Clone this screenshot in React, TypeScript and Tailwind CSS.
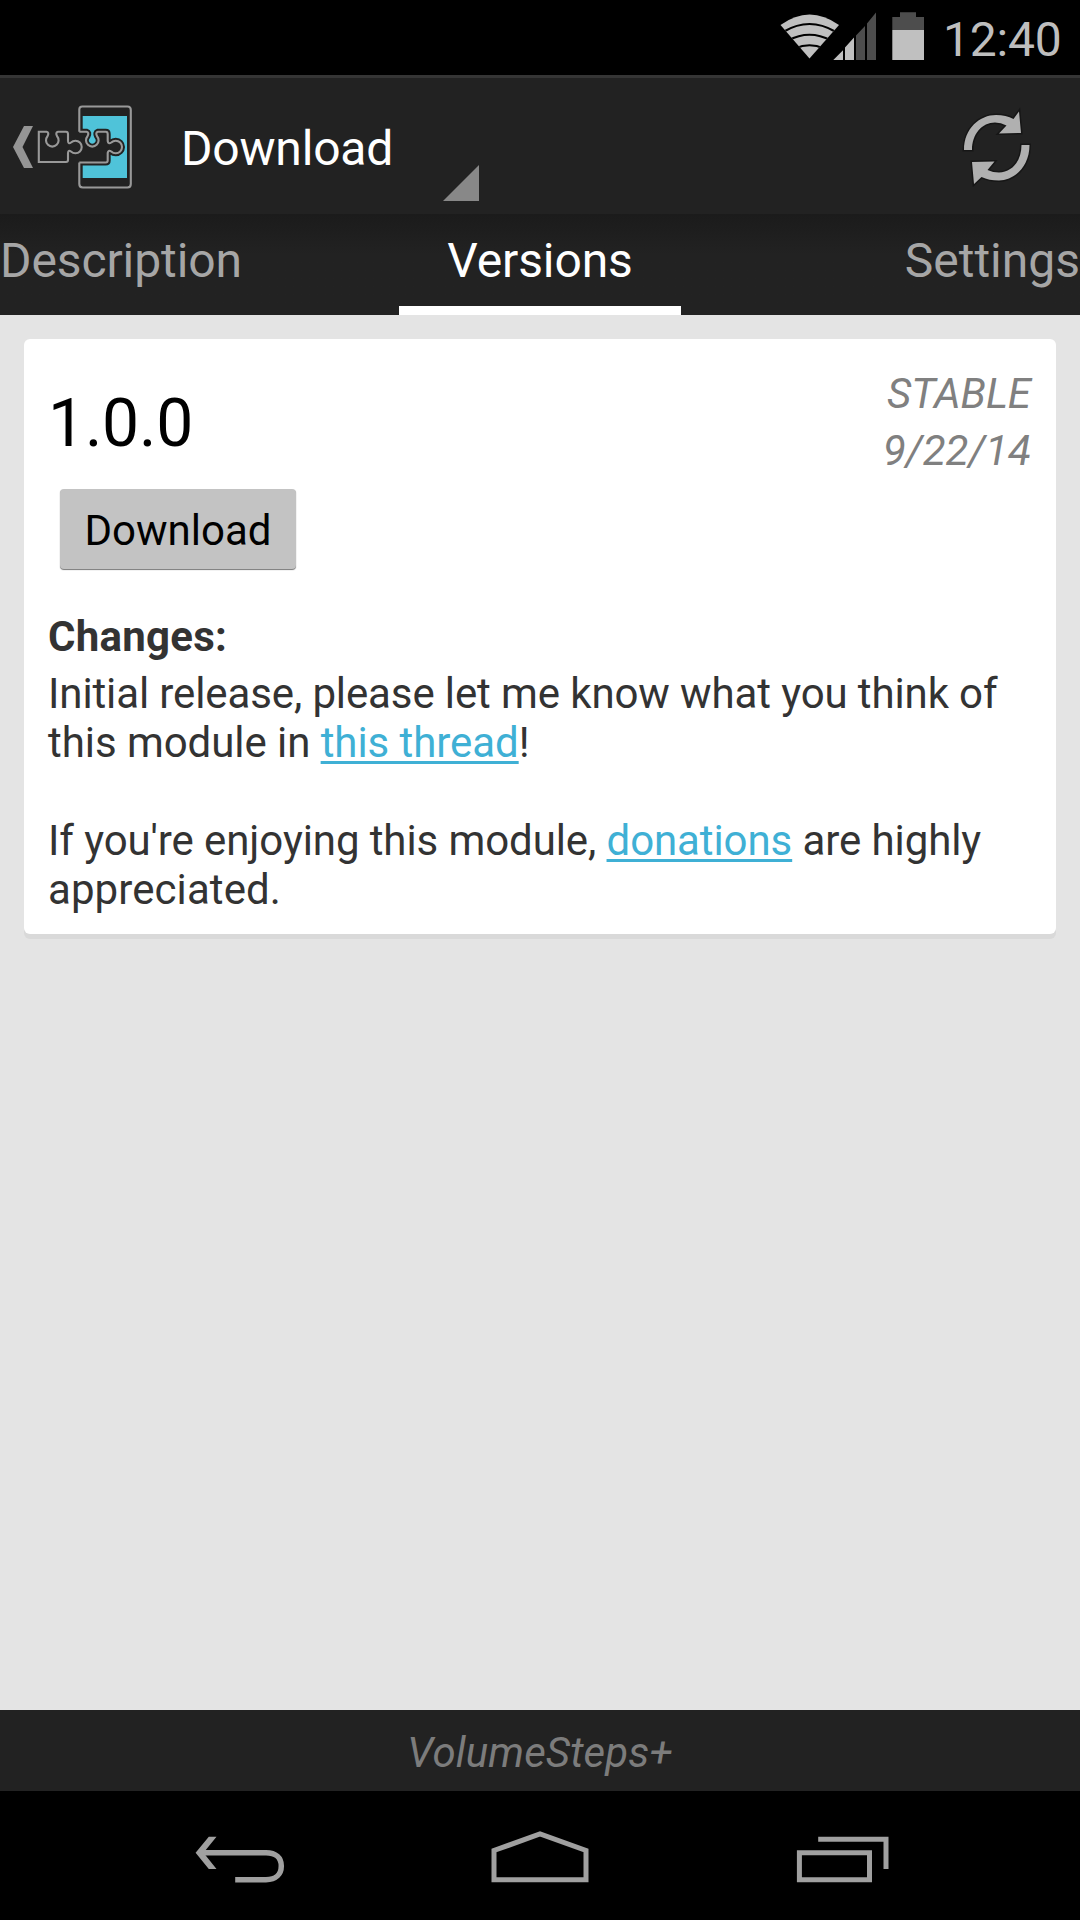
import React from "react";

function StatusBar() {
  return (
    <div className="flex h-[75px] shrink-0 items-start bg-black">
      <svg className="ml-[780px] h-[75px] w-[150px] shrink-0" viewBox="780 0 150 75">
        <defs>
          <clipPath id="wedge">
            <path d="M809.5 58.5 L780.5 25 Q809.5 4 839 25 Z" />
          </clipPath>
        </defs>
        <g clipPath="url(#wedge)">
          <rect x="780" y="10" width="60" height="50" fill="#c0c0c0" />
          <path d="M784 31.500 Q809.500 16.500 835 31.500" fill="none" stroke="#000" strokeWidth="2.200" />
          <path d="M788 40.500 Q809.500 29 831 40.500" fill="none" stroke="#000" strokeWidth="2.200" />
          <path d="M795 48.500 Q809.500 42 824 48.500" fill="none" stroke="#000" strokeWidth="2.200" />
        </g>
        <path d="M833.300 60 L843 50.300 V60Z M845 60 V47.500 L854 37.500 V60Z" fill="#c0c0c0" />
        <path d="M856 60 V35.500 L865 26 V60Z M867 60 V23.500 L876 12.500 V60Z" fill="#4d4d4d" />
        <path d="M892.300 30 V17 H900 V12.300 H916 V17 H924 V30Z" fill="#4d4d4d" />
        <path d="M892.300 30 H924 V60 H892.300Z" fill="#c0c0c0" />
      </svg>
      <span className="ml-[13px] mt-[12px] text-[48px] leading-[56px] tracking-[-0.2px] text-[#bebebe]">12:40</span>
    </div>
  );
}

function Logo() {
  const loosePiece =
    "M38.800 131.700 H46.500 Q49.500 132.500 47.500 136.200 A6.300 6.300 0 1 0 57.100 136.200 Q55.100 132.500 58 131.700 H66 Q68 131.700 68 134 V141 Q68.300 144.500 71 142.500 A6.300 6.300 0 1 1 71 151.500 Q68.300 149.500 68 153 V160 Q68 162 66 162 H38.800Z";
  const dockedPiece =
    "M79.300 131.700 H86.500 Q89.500 132.500 87.500 136.200 A6.300 6.300 0 1 0 97.100 136.200 Q95.100 132.500 98 131.700 H105.700 Q107.700 131.700 107.700 134 V141 Q108.300 144.500 111.300 142.500 A6.300 6.300 0 1 1 111.300 151.500 Q108.300 149.500 107.700 153 V160.500 Q107.700 162.500 105.700 162.500 H79.300";
  return (
    <svg className="h-[84px] w-[124px] shrink-0" viewBox="10 105 124 84" fill="none">
      <path d="M24 126 H33 L22.500 147 L33 168 H24 L13 147Z" fill="#959595" />
      <path d="M82.700 116 H127 V178 H82.700Z" fill="#4fc3d9" />
      <path d={dockedPiece} fill="#222" stroke="#222" strokeWidth="6" />
      <path d="M79.300 131.700 V109.500 Q79.300 106.500 82.300 106.500 H127.500 Q130.800 106.500 130.800 110 V184 Q130.800 187.500 127.500 187.500 H82.800 Q79.300 187.500 79.300 184 V162.500" stroke="#999" strokeWidth="2.100" />
      <path d={dockedPiece} stroke="#999" strokeWidth="2.100" />
      <path d={loosePiece} fill="#222" stroke="#999" strokeWidth="2.100" />
    </svg>
  );
}

function ActionBar() {
  return (
    <header className="flex h-[139px] shrink-0 items-start border-t-[3px] border-[#353535] bg-[#222] pl-[10px] pr-[44px]">
      <div className="mt-[27px]"><Logo /></div>
      <h1 className="ml-[47px] mt-[43px] w-[214px] whitespace-nowrap text-[48px] leading-[56px] tracking-[-0.2px] text-white">Download</h1>
      <svg className="ml-[48px] mt-[87px] h-[36px] w-[36px]" viewBox="0 0 36 36">
        <path d="M0 36 L36 0 V36Z" fill="#888" />
      </svg>
      <svg className="ml-auto mt-[29px] h-[80px] w-[80px]" viewBox="956 107 80 80">
        <g fill="#b0b0b0" stroke="#161616" strokeWidth="3" paintOrder="stroke">
          <path d="M964 150 C964 128 980 115 996 115 Q1006 115 1013.500 119 L1019 111.500 L1021 133 L999 133.500 L1006.500 125.500 Q1001 122.500 995 122.500 C982 122.500 972 134 972 150Z" />
          <path d="M1029.500 145 C1029.500 167 1014 180.500 999 180.500 Q989 180.500 981.500 177 L974 184 L972 162 L994.500 161.500 L987.500 170 Q993 172.500 999 172.500 C1012 172.500 1021.500 161 1021.500 145Z" />
        </g>
      </svg>
    </header>
  );
}

function Tabs() {
  return (
    <nav className="flex h-[101px] shrink-0 items-start justify-between bg-linear-to-b from-[#1b1b1b] to-[#222] to-40% text-[48px] leading-[56px] text-[#a6a6a6]">
      <span className="mt-[19px] w-[399px] tracking-[-0.1px]">Description</span>
      <span className="h-[101px] w-[282px] border-b-[9px] border-white pt-[19px] text-center tracking-[-0.1px] text-white">Versions</span>
      <span className="mt-[19px] w-[399px] text-right">Settings</span>
    </nav>
  );
}

function VersionCard() {
  return (
    <article className="h-[595px] rounded-[6px] bg-white px-6 pt-[26px] text-[42px] leading-[49px] text-[#333] shadow-[0_5px_0_#d9d9d9]">
      <div className="flex h-[124px] items-start justify-between">
        <h2 className="mt-[20px] text-[66px] leading-[77px] tracking-[-0.2px] text-black">1.0.0</h2>
        <div className="mr-px text-right leading-[57px] text-[#808080] italic">
          <div>STABLE</div>
          <div>9/22/14</div>
        </div>
      </div>
      <button className="ml-[12px] block h-[80px] w-[236px] rounded-[4px] bg-[#c3c3c3] pt-[3px] text-black shadow-[0_1px_1px_#777]">Download</button>
      <h3 className="mt-[43px] font-bold tracking-[0.25px]">Changes:</h3>
      <p className="mt-[8px] whitespace-nowrap">
        <span className="tracking-[-0.115px]">Initial release, please let me know what you think of</span><br />
        <span className="tracking-[-0.06px]">this module in <a className="text-[#3fb0d5] underline decoration-[2.5px] underline-offset-[4px] [text-decoration-skip-ink:none]">this thread</a>!</span>
      </p>
      <p className="mt-[49px] whitespace-nowrap">
        <span className="tracking-[-0.09px]">If you're enjoying this module, <a className="text-[#3fb0d5] underline decoration-[2.5px] underline-offset-[4px] [text-decoration-skip-ink:none]">donations</a> are highly</span><br />
        <span className="tracking-[0.08px]">appreciated.</span>
      </p>
    </article>
  );
}

function NavBar() {
  return (
    <div className="flex h-[129px] shrink-0 items-start bg-black pt-[35px]">
      <svg className="ml-[190px] h-[60px] w-[100px]" viewBox="190 1826 100 60" fill="none" stroke="#a0a0a0" strokeWidth="5.500">
        <path d="M201 1852.800 H266 C276 1852.800 281.300 1858 281.300 1866 C281.300 1874 276 1879.700 266 1879.700 H235.200" />
        <path d="M208.800 1836.700 H216.500 L203.500 1852.800 L216.500 1869 H208.800 L195.600 1852.800Z" fill="#a0a0a0" stroke="none" />
      </svg>
      <svg className="ml-[200px] h-[60px] w-[100px]" viewBox="490 1826 100 60" fill="none" stroke="#a0a0a0" strokeWidth="5">
        <path d="M494 1879.700 V1850.500 L540 1834 L586 1850.500 V1879.700Z" />
      </svg>
      <svg className="ml-[200px] h-[60px] w-[110px]" viewBox="790 1826 110 60" fill="none" stroke="#a0a0a0" strokeWidth="5">
        <path d="M799.400 1852.700 H869.500 V1879.800 H799.400Z M818.200 1839.300 H886 V1869" />
      </svg>
    </div>
  );
}

export default function App() {
  return (
    <div className="flex h-[1920px] w-[1080px] flex-col overflow-hidden bg-[#e4e4e4] font-[Roboto,sans-serif]">
      <StatusBar />
      <ActionBar />
      <Tabs />
      <main className="flex-1 px-6 pt-6"><VersionCard /></main>
      <footer className="h-[81px] shrink-0 bg-[#222] pt-[18px] text-center text-[42px] leading-[49px] tracking-[0.1px] text-[#7c7c7c] italic">VolumeSteps+</footer>
      <NavBar />
    </div>
  );
}
